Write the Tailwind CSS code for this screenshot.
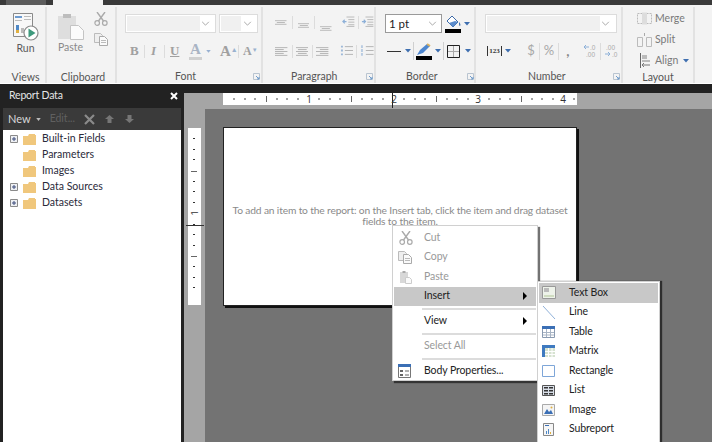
<!DOCTYPE html>
<html lang="en">
<head>
  <meta charset="UTF-8">
  <title>Report Builder</title>
  <script src="https://cdn.jsdelivr.net/npm/@tailwindcss/browser@4"></script>
</head>
<body class="bg-white">
<svg class="hidden">
  <symbol id="caret" viewBox="0 0 6 4"><path d="M0 0h6L3 3.500z" fill="#3f6fb0"/></symbol>
  <symbol id="chev" viewBox="0 0 10 6"><path d="M1 1l4 4 4-4" fill="none" stroke="#999" stroke-width="1"/></symbol>
  <symbol id="launch" viewBox="0 0 7 7"><path d="M.5.500h6v6h-6z" fill="none" stroke="#b9c4d0"/><path d="M3 3l3 3M4 6h2V4" fill="none" stroke="#6f9bcb"/></symbol>
  <symbol id="folder" viewBox="0 0 13 11"><path d="M0 2h5l1-2h6v1l1 0v10H0z" fill="#f0c77c"/></symbol>
  <symbol id="plus" viewBox="0 0 8 8"><path d="M.5.500h7v7h-7z" fill="#eef0f4" stroke="#8a8a8a"/><path d="M2 4h4M4 2v4" stroke="#3a4a7a"/></symbol>
  <symbol id="scissors" viewBox="0 0 14 14"><path d="M3 0l6.500 9M11 0L4.500 9" stroke="#aaa" stroke-width="1.400" fill="none"/><circle cx="3.200" cy="11" r="2.300" fill="none" stroke="#aaa" stroke-width="1.200"/><circle cx="10.800" cy="11" r="2.300" fill="none" stroke="#aaa" stroke-width="1.200"/></symbol>
  <symbol id="copy" viewBox="0 0 14 13"><path d="M.5.500h6l2 2v7h-8z" fill="#eee" stroke="#bbb"/><path d="M5.500 3.500h5l3 3v6h-8z" fill="#fafafa" stroke="#aaa"/><path d="M7 7.500h5M7 9.500h5" stroke="#bbb"/></symbol>
  <symbol id="clip" viewBox="0 0 12 14"><path d="M0 2h8v11H0z" fill="#d8d8d8"/><path d="M2.500 1h3v2h-3z" fill="#aaa"/><path d="M5.500 7.500h4l2 2v4h-6z" fill="#fafafa" stroke="#ccc"/></symbol>
  <symbol id="al" viewBox="0 0 13 9"><path d="M0 .5h13M0 2.500h9M0 4.500h13M0 6.500h9M0 8.500h13" stroke="#b4b4b4"/></symbol>
  <symbol id="ac" viewBox="0 0 13 9"><path d="M0 .5h13M2 2.500h9M0 4.500h13M2 6.500h9M0 8.500h13" stroke="#b4b4b4"/></symbol>
  <symbol id="ar" viewBox="0 0 13 9"><path d="M0 .5h13M4 2.500h9M0 4.500h13M4 6.500h9M0 8.500h13" stroke="#b4b4b4"/></symbol>
  <symbol id="va" viewBox="0 0 13 5"><path d="M0 .5h13M2 2.500h9M0 4.500h13" stroke="#b4b4b4"/></symbol>
  <symbol id="indl" viewBox="0 0 14 12"><path d="M5 .5h9M7 3.500h7M7 6.500h7M7 9.500h7M5 11.500h9" stroke="#b4b4b4" transform="scale(1 .95)"/><path d="M5 5.500H1M3 3.500l-2 2 2 2" stroke="#8db0d8" fill="none" stroke-width="1.300"/></symbol>
  <symbol id="indr" viewBox="0 0 14 12"><path d="M5 .5h9M7 3.500h7M7 6.500h7M7 9.500h7M5 11.500h9" stroke="#b4b4b4" transform="scale(1 .95)"/><path d="M1 5.500h4M3 3.500l2 2-2 2" stroke="#8db0d8" fill="none" stroke-width="1.300"/></symbol>
</svg>

<div class="relative w-[712px] h-[447px] overflow-hidden font-['Lato','Liberation_Sans',sans-serif]">
  <!-- title strip -->
  <div class="flex h-[5px] bg-[#3a3a3a]">
    <div class="w-[40px] ml-[6px] bg-[#5c5c5c]"></div>
    <div class="w-[50px] ml-[7px] bg-[#f3f3f3]"></div>
  </div>

  <!-- ribbon -->
  <div class="flex h-[78px] bg-[#f3f3f3] text-[10.500px] text-[#5a5a5a] border-b border-white box-content">
    <!-- Views -->
    <div class="flex flex-col w-[47px] pl-[6px] border-r-2 border-[#e2e2e2] mt-[2px]">
      <div class="flex-1 min-h-0 flex flex-col items-center pt-[6px]">
        <svg class="w-[26px] h-[28px]" viewBox="0 0 26 28">
          <path d="M.5.500h19v23h-19z" fill="#f8f8f8" stroke="#8a8a8a"/>
          <path d="M2 3h7v2H2z" fill="#6d9bd0"/><path d="M11 3h7v1h-7zM11 6h7v1h-7zM2 7h7v1H2z" fill="#bbb"/>
          <path d="M3 12h3v5H3z" fill="#4f88c6"/><path d="M3 17h3v3H3z" fill="#e0b040"/><path d="M8 15h3v5H8z" fill="#bbb"/>
          <circle cx="18" cy="20" r="7" fill="#fff" stroke="#8a8a8a" stroke-width="1.200"/><path d="M15.500 15.500l7 4.500-7 4.500z" fill="#3f9a7d"/>
        </svg>
        <span class="leading-[14px]">Run</span>
      </div>
      <div class="h-[14px] leading-[16px] text-center text-[#555]">Views</div>
    </div>

    <!-- Clipboard -->
    <div class="flex flex-col w-[70px] border-r-2 border-[#e2e2e2] mt-[2px]">
      <div class="flex-1 min-h-0 flex pt-[4px]">
        <div class="w-[47px] flex flex-col items-center">
          <svg class="w-[26px] h-[27px] mt-[2px]" viewBox="0 0 26 27">
            <path d="M0 3h18v23H0z" fill="#dedede"/><path d="M5 1h8v4H5z" fill="#bdbdbd"/>
            <path d="M12.500 12.500h8l5 5v9h-13z" fill="#fbfbfb" stroke="#c4c4c4"/>
          </svg>
          <span class="text-[#8a8a8a] leading-[14px]">Paste</span>
        </div>
        <div class="flex flex-col gap-[7px] pt-[1px]">
          <svg class="w-[14px] h-[14px]"><use href="#scissors"/></svg>
          <svg class="w-[14px] h-[13px]"><use href="#copy"/></svg>
        </div>
      </div>
      <div class="h-[14px] leading-[16px] text-center text-[#555] pl-[4px]">Clipboard</div>
    </div>

    <!-- Font -->
    <div class="flex flex-col w-[146px] border-r-2 border-[#e2e2e2] mt-[2px]">
      <div class="flex-1 min-h-0 pt-[7px] pl-[8px]">
        <div class="flex gap-[3px]">
          <div class="flex items-center justify-between w-[91px] h-[19px] border border-[#dcdcdc] bg-white p-[1px]">
            <div class="w-[73px] h-full bg-[#f0f0f0]"></div><svg class="w-[9px] h-[5px] mr-[4px]"><use href="#chev"/></svg>
          </div>
          <div class="flex items-center justify-between w-[39px] h-[19px] border border-[#dcdcdc] bg-white p-[1px]">
            <div class="w-[20px] h-full bg-[#f0f0f0]"></div><svg class="w-[9px] h-[5px] mr-[4px]"><use href="#chev"/></svg>
          </div>
        </div>
        <div class="flex items-center h-[18px] mt-[9px] font-['Liberation_Serif',serif] text-[#a0a0a0] font-bold">
          <span class="w-[19px] pl-[5px] text-[13px]">B</span>
          <span class="w-px h-[13px] bg-[#dcdcdc]"></span>
          <span class="w-[19px] pl-[6px] text-[13px] italic">I</span>
          <span class="w-px h-[13px] bg-[#dcdcdc]"></span>
          <span class="w-[23px] pl-[5px] text-[13px] underline">U</span>
          <span class="w-[13px] text-[15px] text-[#a9b4c4] border-b-[3px] border-[#d0d0d0] leading-[15px] ml-[1px] text-center">A</span>
          <svg class="w-[5px] h-[3px] ml-[4px] opacity-50"><use href="#caret"/></svg>
          <span class="ml-[9px] w-[18px] text-[15px]">A<sup class="text-[7px] text-[#9ab2cf]">▲</sup></span>
          <span class="w-px h-[13px] bg-[#dcdcdc]"></span>
          <span class="ml-[4px] text-[12px]">A<sup class="text-[6px] text-[#9ab2cf]">▼</sup></span>
        </div>
      </div>
      <div class="flex h-[14px] leading-[16px] text-[#555] pl-[58px] items-center"><span class="w-[78px]">Font</span><svg class="w-[7px] h-[7px]"><use href="#launch"/></svg></div>
    </div>

    <!-- Paragraph -->
    <div class="flex flex-col w-[113px] border-r-2 border-[#e2e2e2] mt-[2px]">
      <div class="flex-1 min-h-0 pt-[9px] pl-[12px]">
        <div class="flex items-start h-[20px]">
          <svg class="w-[13px] h-[5px] mt-[4px]"><use href="#va"/></svg><span class="w-px h-[13px] bg-[#dcdcdc] ml-[5px] mr-[5px]"></span>
          <svg class="w-[13px] h-[5px] mt-[7px]"><use href="#va"/></svg><span class="w-px h-[13px] bg-[#dcdcdc] ml-[5px] mr-[5px]"></span>
          <svg class="w-[13px] h-[5px] mt-[10px]"><use href="#va"/></svg>
          <svg class="w-[14px] h-[12px] ml-[10px]"><use href="#indl"/></svg><span class="w-px h-[13px] bg-[#dcdcdc] ml-[3px] mr-[3px]"></span>
          <svg class="w-[14px] h-[12px]"><use href="#indr"/></svg>
        </div>
        <div class="flex items-center h-[18px] mt-[6px]">
          <svg class="w-[13px] h-[9px]"><use href="#al"/></svg><span class="w-px h-[13px] bg-[#dcdcdc] ml-[4px] mr-[3px]"></span>
          <svg class="w-[13px] h-[9px]"><use href="#ac"/></svg><span class="w-px h-[13px] bg-[#dcdcdc] ml-[4px] mr-[3px]"></span>
          <svg class="w-[13px] h-[9px]"><use href="#ar"/></svg>
          <svg class="w-[14px] h-[12px] ml-[11px]" viewBox="0 0 14 12"><path d="M5 1.500h9M5 5.500h9M5 9.500h9" stroke="#b4b4b4"/><path d="M1 .5h2v2H1zM1 4.500h2v2H1zM1 8.500h2v2H1z" fill="#9db8d8"/></svg>
          <span class="w-px h-[13px] bg-[#dcdcdc] ml-[3px] mr-[3px]"></span>
          <svg class="w-[14px] h-[12px]" viewBox="0 0 14 12"><path d="M6 1.500h8M6 5.500h8M6 9.500h8" stroke="#b4b4b4"/><path d="M1 0h2v3H1zM1 4h2v3H1zM1 8h2v3H1z" fill="#b9cce2"/></svg>
        </div>
      </div>
      <div class="flex h-[14px] leading-[16px] text-[#555] pl-[28px] items-center"><span class="w-[75px]">Paragraph</span><svg class="w-[7px] h-[7px]"><use href="#launch"/></svg></div>
    </div>

    <!-- Border -->
    <div class="flex flex-col w-[100px] border-r-2 border-[#e2e2e2] mt-[2px]">
      <div class="flex-1 min-h-0 pt-[7px] pl-[9px]">
        <div class="flex items-center h-[19px]">
          <div class="flex items-center justify-between w-[57px] h-[19px] border border-[#9a9a9a] bg-white pl-[3px] text-[#222] text-[11.500px]">
            1 pt<svg class="w-[9px] h-[5px] mr-[4px]"><use href="#chev"/></svg>
          </div>
          <svg class="w-[16px] h-[18px] ml-[3px]" viewBox="0 0 16 18">
            <path d="M7 1l6 6-5 5-6-6z" fill="#fff" stroke="#3d6aa8"/><path d="M4 8l4 4 5-5-3-1z" fill="#5b8ccc"/><path d="M14 7c1 1 2 3 1 4-1 0-1-2-1-4" fill="#3d6aa8"/>
            <path d="M0 14h16v4H0z" fill="#000"/>
          </svg>
          <svg class="w-[6px] h-[4px] ml-[3px]"><use href="#caret"/></svg>
        </div>
        <div class="flex items-center h-[18px] mt-[9px]">
          <span class="w-[14px] h-px bg-[#333] ml-[2px]"></span>
          <svg class="w-[6px] h-[4px] ml-[4px]"><use href="#caret"/></svg>
          <span class="w-px h-[18px] bg-[#cfcfcf] ml-[2px]"></span>
          <svg class="w-[16px] h-[18px] ml-[2px]" viewBox="0 0 16 18">
            <path d="M1 13l3-5 7-6 3 2-7 7z" fill="#4d86cf"/><path d="M11 2l3 2" stroke="#d8b060" stroke-width="2"/>
            <path d="M0 14h16v4H0z" fill="#000"/>
          </svg>
          <svg class="w-[6px] h-[4px] ml-[3px]"><use href="#caret"/></svg>
          <span class="w-px h-[18px] bg-[#cfcfcf] ml-[2px]"></span>
          <svg class="w-[13px] h-[13px] ml-[3px]" viewBox="0 0 13 13"><path d="M.5.500h12v12H.5z" fill="none" stroke="#222"/><path d="M6.500 1v11M1 6.500h11" stroke="#aaa"/></svg>
          <svg class="w-[6px] h-[4px] ml-[5px]"><use href="#caret"/></svg>
        </div>
      </div>
      <div class="flex h-[14px] leading-[16px] text-[#555] pl-[30px] items-center"><span class="w-[61px]">Border</span><svg class="w-[7px] h-[7px]"><use href="#launch"/></svg></div>
    </div>

    <!-- Number -->
    <div class="flex flex-col w-[147px] border-r-2 border-[#e2e2e2] mt-[2px]">
      <div class="flex-1 min-h-0 pt-[7px] pl-[9px]">
        <div class="flex items-center justify-between w-[132px] h-[19px] border border-[#dcdcdc] bg-white p-[1px]">
          <div class="w-[113px] h-full bg-[#f0f0f0]"></div><svg class="w-[9px] h-[5px] mr-[5px]"><use href="#chev"/></svg>
        </div>
        <div class="flex items-center h-[18px] mt-[9px] text-[#a8a8a8]">
          <span class="ml-[2px] w-[15px] h-[10px] border-x border-[#333] text-[7px] leading-[10px] text-center font-bold text-[#333] font-['Liberation_Serif',serif]">123</span>
          <svg class="w-[6px] h-[4px] ml-[3px]"><use href="#caret"/></svg>
          <span class="ml-[14px] w-[12px] text-[13px] text-center">$</span>
          <span class="w-px h-[17px] bg-[#dcdcdc] ml-[2px]"></span>
          <span class="w-[18px] text-[13px] text-center">%</span>
          <span class="w-px h-[17px] bg-[#dcdcdc]"></span>
          <span class="w-[18px] text-[14px] font-bold text-center leading-[12px] text-[#888]">,</span>
          <svg class="w-[15px] h-[14px] ml-[6px]" viewBox="0 0 15 14"><path d="M6 3H1M3 1L1 3l2 2" stroke="#8db0d8" fill="none"/><text x="7" y="6" font-size="6.500" fill="#aaa" font-family="Liberation Sans">.0</text><text x="3" y="13" font-size="6.500" fill="#aaa" font-family="Liberation Sans">.00</text></svg>
          <span class="w-px h-[17px] bg-[#dcdcdc] ml-[2px] mr-[3px]"></span>
          <svg class="w-[15px] h-[14px]" viewBox="0 0 15 14"><text x="2" y="6" font-size="6.500" fill="#aaa" font-family="Liberation Sans">.00</text><path d="M1 10h5M4 8l2 2-2 2" stroke="#8db0d8" fill="none"/><text x="8" y="13" font-size="6.500" fill="#aaa" font-family="Liberation Sans">.0</text></svg>
        </div>
      </div>
      <div class="flex h-[14px] leading-[16px] text-[#555] pl-[52px] items-center"><span class="w-[85px]">Number</span><svg class="w-[7px] h-[7px]"><use href="#launch"/></svg></div>
    </div>

    <!-- Layout -->
    <div class="flex flex-col w-[72px] border-r-2 border-[#e2e2e2] mt-[2px]">
      <div class="flex-1 min-h-0 flex flex-col pt-[1px] pl-[14px] text-[#7a7a7a]">
        <div class="flex items-center h-[21px] shrink-0 gap-[3px]">
          <svg class="w-[15px] h-[13px]" viewBox="0 0 15 13"><path d="M.5 1.500h14v10H.5z" fill="none" stroke="#bbb" stroke-dasharray="2 1"/><path d="M5 .5h5v12H5z" fill="#ddd"/></svg>Merge
        </div>
        <div class="flex items-center h-[21px] shrink-0 gap-[3px]">
          <svg class="w-[15px] h-[14px]" viewBox="0 0 15 14"><path d="M.5 4.500h5v9h-5zM9.500 4.500h5v9h-5z" fill="none" stroke="#bbb"/><path d="M7.500 0v3" stroke="#aaa"/></svg>Split
        </div>
        <div class="flex items-center h-[21px] shrink-0 pl-[3px]">
          <svg class="w-[12px] h-[15px]" viewBox="0 0 12 15"><path d="M.5 0v15" stroke="#666"/><path d="M2 2h5v4H2zM2 7h8v2H2z" fill="#bbb"/><path d="M10 12H2M4 10l-2 2 2 2" stroke="#777" fill="none"/></svg>
          <span class="ml-[3px]">Align</span><svg class="w-[6px] h-[4px] ml-[5px]"><use href="#caret"/></svg>
        </div>
      </div>
      <div class="h-[14px] leading-[16px] text-center text-[#555]">Layout</div>
    </div>
  </div>

  <!-- designer area -->
  <div class="relative flex h-[358px] bg-[#222] overflow-hidden">
    <!-- report data panel -->
    <div class="flex flex-col w-[184px] shrink-0">
      <div class="flex items-center justify-between h-[24px] pl-[9px] pr-[6px] text-[#e6e6e6] text-[10.500px] tracking-[-0.2px]">
        <span>Report Data</span>
        <svg class="w-[8px] h-[8px]" viewBox="0 0 8 8"><path d="M1 1l6 6M7 1L1 7" stroke="#fff" stroke-width="2"/></svg>
      </div>
      <div class="flex items-center h-[22px] ml-[3px] w-[178px] bg-[#3a3a3a] pl-[5px] text-[11px] text-[#d8d8d8]">
        New
        <svg class="w-[5px] h-[3px] ml-[5px]" viewBox="0 0 6 4"><path d="M0 0h6L3 4z" fill="#bbb"/></svg>
        <span class="ml-[9px] text-[#606060] text-[10.500px]">Edit...</span>
        <svg class="w-[11px] h-[11px] ml-[9px]" viewBox="0 0 11 11"><path d="M1 1l9 9M10 1l-9 9" stroke="#8a8a8a" stroke-width="2.200"/></svg>
        <svg class="w-[9px] h-[8px] ml-[10px]" viewBox="0 0 9 8"><path d="M4.500 0L9 4H6.500v4h-4V4H0z" fill="#767676"/></svg>
        <svg class="w-[9px] h-[8px] ml-[11px]" viewBox="0 0 9 8"><path d="M4.500 8L9 4H6.500V0h-4v4H0z" fill="#767676"/></svg>
      </div>
      <div class="flex-1 ml-[3px] w-[178px] bg-white pt-[1px] text-[10.500px] text-[#2a2a3a]">
        <div class="flex items-center h-[16px] pl-[7px]"><svg class="w-[8px] h-[8px]"><use href="#plus"/></svg><svg class="w-[13px] h-[11px] ml-[5px]"><use href="#folder"/></svg><span class="ml-[6px]">Built-in Fields</span></div>
        <div class="flex items-center h-[16px] pl-[20px]"><svg class="w-[13px] h-[11px]"><use href="#folder"/></svg><span class="ml-[6px]">Parameters</span></div>
        <div class="flex items-center h-[16px] pl-[20px]"><svg class="w-[13px] h-[11px]"><use href="#folder"/></svg><span class="ml-[6px]">Images</span></div>
        <div class="flex items-center h-[16px] pl-[7px]"><svg class="w-[8px] h-[8px]"><use href="#plus"/></svg><svg class="w-[13px] h-[11px] ml-[5px]"><use href="#folder"/></svg><span class="ml-[6px]">Data Sources</span></div>
        <div class="flex items-center h-[16px] pl-[7px]"><svg class="w-[8px] h-[8px]"><use href="#plus"/></svg><svg class="w-[13px] h-[11px] ml-[5px]"><use href="#folder"/></svg><span class="ml-[6px]">Datasets</span></div>
      </div>
    </div>

    <!-- design surface -->
    <div class="flex flex-col flex-1 mt-[9px]">
      <div class="h-[16px] bg-[#a5a5a5] pl-[39px] shrink-0">
        <svg class="w-[354px] h-[16px] overflow-visible" viewBox="0 0 354 16">
          <path d="M0 0h354v12H0z" fill="#fff"/>
          <path d="M11 5v2M22 5v2M32 5v2M54 5v2M64 5v2M75 5v2M96 5v2M107 5v2M117 5v2M139 5v2M149 5v2M160 5v2M181 5v2M192 5v2M202 5v2M224 5v2M234 5v2M245 5v2M266 5v2M277 5v2M287 5v2M309 5v2M319 5v2M330 5v2M351 5v2" stroke="#444"/>
          <path d="M43.500 3v6M128.500 3v6M213.500 3v6M298.500 3v6" stroke="#666"/>
          <path d="M169.500 0v15" stroke="#222"/>
          <g font-size="10" font-family="Open Sans" fill="#333" text-anchor="middle"><text x="86" y="10">1</text><text x="171" y="10">2</text><text x="255" y="10">3</text><text x="340" y="10">4</text></g>
        </svg>
      </div>
      <div class="flex flex-1">
        <div class="w-[21px] bg-[#a5a5a5] shrink-0 pl-[4px] pt-[19px]">
          <svg class="w-[13px] h-[177px] overflow-visible" viewBox="0 0 13 177">
            <path d="M0 0h13v177H0z" fill="#fff"/>
            <path d="M5 10.500h2M5 21.500h2M5 31.500h2M5 53.500h2M5 63.500h2M5 74.500h2M5 96.500h2M5 106.500h2M5 117.500h2M5 138.500h2M5 149.500h2M5 159.500h2" stroke="#333"/>
            <path d="M3 43.500h6M3 128.500h6" stroke="#666"/>
            <path d="M-2 97.500h18" stroke="#333"/>
            <text x="-85" y="10" transform="rotate(-90)" font-size="9" font-family="Open Sans" fill="#333" text-anchor="middle">1</text>
          </svg>
        </div>
        <div class="flex-1 bg-[#737373] pt-[18px] pl-[18px]">
          <div class="flex flex-col items-center w-[354px] h-[179px] bg-white border border-[#222] shadow-[2px_2px_0_#111] pt-[77px] text-[10.250px] tracking-[-0.16px] leading-[11px] text-[#8a8a8a]">
            <span class="whitespace-nowrap">To add an item to the report: on the Insert tab, click the item and drag dataset</span>
            <span>fields to the item.</span>
          </div>
        </div>
      </div>
    </div>

    <!-- context menu -->
    <div class="absolute left-[392px] top-[141px] w-[146px] h-[156px] bg-white border border-[#d0d0d0] shadow-[2px_2px_1px_rgba(0,0,0,.55)] pt-[2px] px-[1px] text-[10.500px] tracking-[-0.1px] text-[#222]">
      <div class="flex items-center h-[19.500px] text-[#999]"><span class="w-[30px] pl-[5px]"><svg class="w-[14px] h-[14px]"><use href="#scissors"/></svg></span>Cut</div>
      <div class="flex items-center h-[19.500px] text-[#999]"><span class="w-[30px] pl-[4px]"><svg class="w-[14px] h-[13px]"><use href="#copy"/></svg></span>Copy</div>
      <div class="flex items-center h-[19.500px] text-[#999]"><span class="w-[30px] pl-[6px]"><svg class="w-[12px] h-[14px]"><use href="#clip"/></svg></span>Paste</div>
      <div class="flex items-center h-[19.500px] bg-[#c8c8c8] pr-[9px]"><span class="w-[30px]"></span>Insert<span class="ml-auto w-0 h-0 border-y-[4px] border-y-transparent border-l-[4px] border-l-black"></span></div>
      <div class="flex items-center h-[5px] pl-[28px]"><span class="w-full h-[2px] bg-[#dcdcdc]"></span></div>
      <div class="flex items-center h-[20px] pr-[9px]"><span class="w-[30px]"></span>View<span class="ml-auto w-0 h-0 border-y-[4px] border-y-transparent border-l-[4px] border-l-black"></span></div>
      <div class="flex items-center h-[5px] pl-[28px]"><span class="w-full h-[2px] bg-[#dcdcdc]"></span></div>
      <div class="flex items-center h-[20px] text-[#999]"><span class="w-[30px]"></span>Select All</div>
      <div class="flex items-center h-[5px] pl-[28px]"><span class="w-full h-[2px] bg-[#dcdcdc]"></span></div>
      <div class="flex items-center h-[20px]"><span class="w-[30px] pl-[4px]">
        <svg class="w-[13px] h-[14px]" viewBox="0 0 13 14"><path d="M.5.500h12v13H.5z" fill="#fff" stroke="#777"/><path d="M0 0h13v3H0z" fill="#3b6fb5"/><path d="M2 6h3v2H2zM2 10h3v2H2z" fill="#666"/><path d="M7 7h4M7 11h4" stroke="#666"/></svg>
      </span>Body Properties...</div>
    </div>

    <!-- insert submenu -->
    <div class="absolute left-[537px] top-[197px] w-[123px] h-[180px] bg-white border border-[#d0d0d0] shadow-[2px_0_1px_rgba(0,0,0,.6)] pt-[1px] px-[1px] text-[10.500px] tracking-[-0.1px] text-[#222]">
      <div class="flex items-center h-[19.500px] bg-[#c8c8c8]"><span class="w-[30px] pl-[3px]">
        <svg class="w-[14px] h-[13px]" viewBox="0 0 14 13"><path d="M.5.500h13v12H.5z" fill="#eef3ea" stroke="#999"/><path d="M2 2h5v4H2z" fill="#bbb"/><path d="M2 9h10v2H2z" fill="#cfdcc0"/></svg>
      </span>Text Box</div>
      <div class="flex items-center h-[19.500px]"><span class="w-[30px] pl-[3px]">
        <svg class="w-[14px] h-[13px]" viewBox="0 0 14 13"><path d="M1 0l12 13" stroke="#8fb0d8"/></svg>
      </span>Line</div>
      <div class="flex items-center h-[19.500px]"><span class="w-[30px] pl-[3px]">
        <svg class="w-[13px] h-[12px]" viewBox="0 0 13 12"><path d="M.5.500h12v11H.5z" fill="#fff" stroke="#8a9ab0"/><path d="M0 0h13v3H0z" fill="#3b6fb5"/><path d="M4.500 3v8M8.500 3v8M1 6.500h11M1 9h11" stroke="#a8b4c4"/></svg>
      </span>Table</div>
      <div class="flex items-center h-[19.500px]"><span class="w-[30px] pl-[3px]">
        <svg class="w-[13px] h-[12px]" viewBox="0 0 13 12"><path d="M0 0h13v12H0z" fill="#d6e2d0"/><path d="M0 0h13v3H0zM0 3h3v9H0z" fill="#3f7ac0"/><path d="M3 6.500h10M3 9.500h10M6.500 3v9M10 3v9" stroke="#fff"/></svg>
      </span>Matrix</div>
      <div class="flex items-center h-[19.500px]"><span class="w-[30px] pl-[3px]">
        <svg class="w-[13px] h-[12px]" viewBox="0 0 13 12"><path d="M.5.500h12v11H.5z" fill="#fff" stroke="#7ea6d8"/></svg>
      </span>Rectangle</div>
      <div class="flex items-center h-[19.500px]"><span class="w-[30px] pl-[3px]">
        <svg class="w-[13px] h-[11px]" viewBox="0 0 13 11"><path d="M.5.500h12v10H.5z" fill="#d9dfe8" stroke="#555"/><path d="M2 2h4v1.500H2zM7 2h4v1.500H7zM2 5h4v1.500H2zM7 5h4v1.500H7zM2 8h4v1.500H2zM7 8h4v1.500H7z" fill="#333"/></svg>
      </span>List</div>
      <div class="flex items-center h-[19.500px]"><span class="w-[30px] pl-[3px]">
        <svg class="w-[13px] h-[12px]" viewBox="0 0 13 12"><path d="M.5.500h12v11H.5z" fill="#f4f4f4" stroke="#aaa"/><path d="M2 10l3-5 2 3 2-2 2 4z" fill="#3b6fb5"/><circle cx="9.500" cy="3.500" r="1" fill="#e0b040"/></svg>
      </span>Image</div>
      <div class="flex items-center h-[19.500px]"><span class="w-[30px] pl-[4px]">
        <svg class="w-[11px] h-[13px]" viewBox="0 0 11 13"><path d="M.5.500h10v12H.5z" fill="#f6f6f6" stroke="#888"/><path d="M2 2h4v1H2z" fill="#3b6fb5"/><path d="M3 8h1v3H3zM5 6h1v5H5z" fill="#4f88c6"/><path d="M7 9h1v2H7z" fill="#e0b040"/></svg>
      </span>Subreport</div>
      <div class="flex items-start h-[19.500px] pl-[5px] pt-[3px]"><svg class="w-[10px] h-[8px]"><use href="#folder"/></svg></div>
    </div>
  </div>
</div>
</body>
</html>
